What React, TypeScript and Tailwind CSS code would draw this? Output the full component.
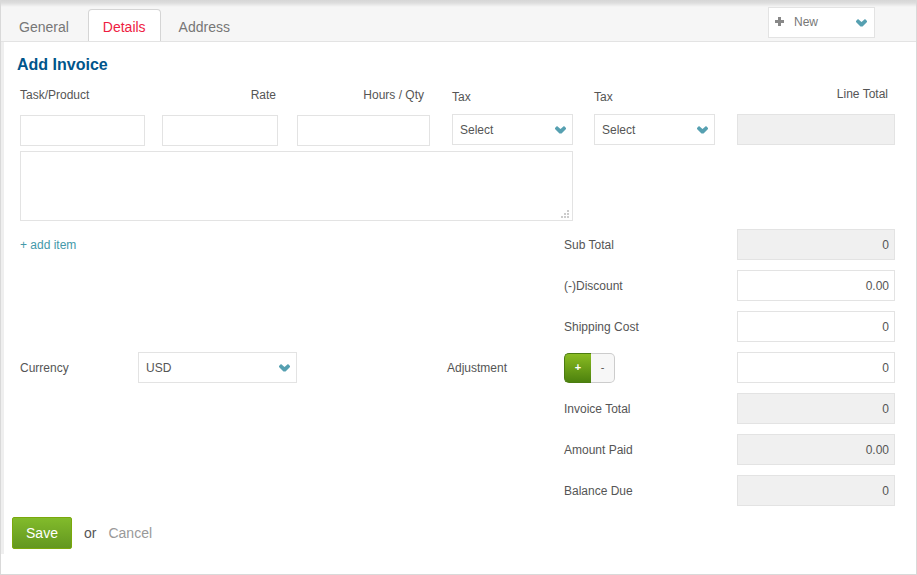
import { useState } from "react";
import type { ComponentProps, ReactNode } from "react";
import clsx from "clsx";

const tabs = ["General", "Details", "Address"];

const field = "block h-[31px] w-full min-w-0 border border-[#e3e3e3] px-[5px] text-right";

function Chevron() {
  return (
    <svg
      aria-hidden
      viewBox="0 0 12 8"
      className="pointer-events-none absolute right-1.5 top-1/2 h-2 w-3 -translate-y-1/2"
    >
      <path d="M0 2L2 0L5.5 3L9 0L11 2V3L6.5 7.5H4.5L0 3z" fill="#56a0b1" />
    </svg>
  );
}

function TextInput({ readOnly, ...props }: ComponentProps<"input">) {
  return (
    <input
      type="text"
      readOnly={readOnly}
      className={clsx(field, readOnly ? "bg-[#f0f0f0]" : "bg-white")}
      {...props}
    />
  );
}

function Select({ id, children }: { id: string; children: ReactNode }) {
  return (
    <div className="relative">
      <select
        id={id}
        className="block h-[31px] w-full appearance-none border border-[#e3e3e3] bg-white pl-[7px] pr-6"
      >
        {children}
      </select>
      <Chevron />
    </div>
  );
}

function TotalRow({ id, label, value, readOnly }: { id: string; label: string; value: string; readOnly?: boolean }) {
  return (
    <>
      <label htmlFor={id} className="col-start-5">
        {label}
      </label>
      <TextInput id={id} defaultValue={value} readOnly={readOnly} />
    </>
  );
}

function TabBar() {
  return (
    <header className="flex h-[42px] items-end justify-between border-b border-[#e3e3e3] bg-[linear-gradient(#d6d6d6,#dedede_3px,#f6f6f6_7px)] pr-[41px]">
      <nav className="flex pl-[3px] text-sm">
        {tabs.map((tab) => (
          <a
            key={tab}
            href={`#${tab.toLowerCase()}`}
            aria-current={tab === "Details" ? "page" : undefined}
            className={clsx(
              "mr-[3px] flex h-8 items-center rounded-t border border-b-0 px-3.5 pt-[3px] first:mr-1",
              tab === "Details" ? "border-[#d5d5d5] bg-white text-[#ee1c42]" : "border-transparent text-[#777]"
            )}
          >
            {tab}
          </a>
        ))}
      </nav>
      <button
        type="button"
        className="relative mb-[3px] flex h-[31px] w-[107px] items-center border border-[#e3e3e3] bg-white pb-0.5 pl-1.5 text-[#777]"
      >
        <svg aria-hidden viewBox="0 0 9 9" className="mr-2.5 h-[9px] w-[9px]">
          <path d="M3 0h3v3h3v3H6v3H3V6H0V3h3z" fill="#888" />
        </svg>
        New
        <Chevron />
      </button>
    </header>
  );
}

function LineItem() {
  return (
    <div className="grid grid-cols-[142fr_135fr_155fr_142fr_143fr_158fr] items-start leading-4">
      <div className="min-w-0 pr-[17px] pt-px">
        <label htmlFor="task" className="mb-3 block">
          Task/Product
        </label>
        <TextInput id="task" />
      </div>
      <div className="min-w-0 pr-[19px] pt-px">
        <label htmlFor="rate" className="mb-3 block pr-0.5 text-right">
          Rate
        </label>
        <TextInput id="rate" />
      </div>
      <div className="min-w-0 pr-[22px] pt-px">
        <label htmlFor="qty" className="mb-3 block pr-1.5 text-right">
          Hours / Qty
        </label>
        <TextInput id="qty" />
      </div>
      <div className="min-w-0 pr-[21px] pt-[3px]">
        <label htmlFor="tax1" className="mb-[9px] block">
          Tax
        </label>
        <Select id="tax1">
          <option>Select</option>
        </Select>
      </div>
      <div className="min-w-0 pr-[22px] pt-[3px]">
        <label htmlFor="tax2" className="mb-[9px] block">
          Tax
        </label>
        <Select id="tax2">
          <option>Select</option>
        </Select>
      </div>
      <div className="min-w-0">
        <label htmlFor="line-total" className="mb-3 block pr-[7px] text-right">
          Line Total
        </label>
        <TextInput id="line-total" readOnly />
      </div>

      <div className="col-span-4 pr-[21px] pt-[5px]">
        <div className="relative">
          <textarea
            aria-label="Description"
            className="block h-[70px] w-full resize-none border border-[#e3e3e3] bg-white p-1.5"
          />
          <svg
            aria-hidden
            viewBox="0 0 8 8"
            className="pointer-events-none absolute bottom-[3px] right-1 h-2 w-2"
          >
            <path d="M6 0h2v2H6zM3 3h2v2H3zM6 3h2v2H6zM0 6h2v2H0zM3 6h2v2H3zM6 6h2v2H6z" fill="#ccc" />
          </svg>
        </div>
      </div>
    </div>
  );
}

function Adjustment() {
  const [sign, setSign] = useState("+");

  return (
    <div role="group" aria-label="Adjustment sign" className="flex h-[30px] text-[11px] font-bold">
      {["+", "-"].map((s) => (
        <button
          key={s}
          type="button"
          aria-pressed={sign === s}
          onClick={() => setSign(s)}
          className={clsx(
            "border first:w-[27px] first:rounded-l-[5px] first:border-r-0 last:w-6 last:rounded-r-[5px] last:border-l-0",
            sign === s
              ? "border-[#4b7c10] bg-linear-to-b from-[#8abc22] to-[#4d820e] text-white"
              : "border-[#ccc] bg-[#f7f7f7] font-normal"
          )}
        >
          {s}
        </button>
      ))}
    </div>
  );
}

export default function App() {
  return (
    <div className="flex min-h-screen flex-col border-b border-l border-r border-[#d9d9d9] bg-white font-['Liberation_Sans',Arial,sans-serif] text-xs text-[#555]">
      <TabBar />

      <form
        onSubmit={(e) => e.preventDefault()}
        className="mb-5 border-l-[3px] border-[#efefef] pb-[5px] pr-[21px]"
      >
        <h1 className="pl-[13px] pt-[11px] text-base font-bold leading-6 text-[#00558b]">Add Invoice</h1>

        <div className="pl-4 pt-[9px]">
          <LineItem />

          <div className="mt-2 grid grid-cols-[118fr_159fr_150fr_117fr_173fr_158fr] items-center gap-y-2.5">
            <a href="#add" className="col-span-4 text-[#4499a9]">
              + add item
            </a>
            <TotalRow id="sub-total" label="Sub Total" value="0" readOnly />
            <TotalRow id="discount" label="(-)Discount" value="0.00" />
            <TotalRow id="shipping" label="Shipping Cost" value="0" />

            <label htmlFor="currency">Currency</label>
            <Select id="currency">
              <option>USD</option>
            </Select>
            <label htmlFor="adjustment" className="col-start-4">
              Adjustment
            </label>
            <Adjustment />
            <TextInput id="adjustment" defaultValue="0" />

            <TotalRow id="invoice-total" label="Invoice Total" value="0" readOnly />
            <TotalRow id="amount-paid" label="Amount Paid" value="0.00" readOnly />
            <TotalRow id="balance" label="Balance Due" value="0" readOnly />
          </div>
        </div>

        <div className="mt-[11px] flex items-center pl-2 text-sm">
          <button
            type="submit"
            className="h-8 w-[60px] rounded-xs border border-[#7aa80c] bg-linear-to-b from-[#82bb2b] to-[#639720] text-white"
          >
            Save
          </button>
          <span className="mx-3">or</span>
          <a href="#cancel" className="text-[#999]">
            Cancel
          </a>
        </div>
      </form>
    </div>
  );
}
